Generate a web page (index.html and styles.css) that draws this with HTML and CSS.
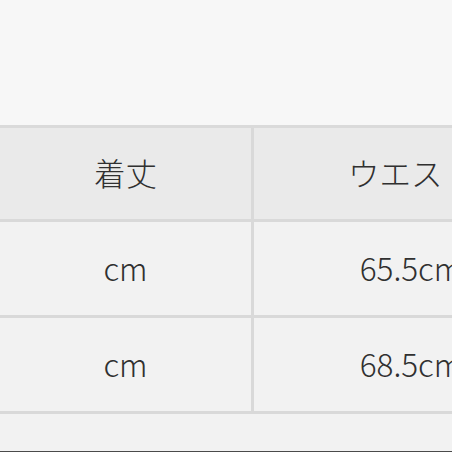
FILE: index.html
```html
<!DOCTYPE html>
<html lang="ja">
<head>
<meta charset="utf-8">
<link rel="stylesheet" href="styles.css">
</head>
<body>
<div class="page">
  <div class="top"></div>
  <div class="table">
    <div class="cell head">着丈</div>
    <div class="cell head">ウエスト</div>
    <div class="cell">cm</div>
    <div class="cell">65.5cm</div>
    <div class="cell">cm</div>
    <div class="cell">68.5cm</div>
  </div>
  <div class="rest"></div>
</div>
</body>
</html>
```
FILE: styles.css
```css
html, body {
  margin: 0;
  padding: 0;
  width: 452px;
  height: 452px;
  overflow: hidden;
  background: #f6f6f6;
}
.page {
  height: 452px;
  display: flex;
  flex-direction: column;
  font-family: "Noto Sans CJK JP", "Noto Sans", sans-serif;
  font-weight: 300;
  color: #303030;
}
.top {
  height: 125px;
  flex: none;
  background: #f7f7f7;
}
.table {
  flex: none;
  display: grid;
  grid-template-columns: 254px 317px;
  width: max-content;
  border-top: 3px solid #dadada;
  background: #f2f2f2;
}
.cell {
  box-sizing: border-box;
  height: 96px;
  border-right: 3px solid #d9d9d9;
  border-bottom: 3px solid #d9d9d9;
  display: flex;
  align-items: center;
  justify-content: center;
  font-size: 31.5px;
  line-height: 1;
  white-space: nowrap;
  padding-bottom: 1px;
}
.head {
  height: 94px;
  background: #eaeaea;
}
.rest {
  flex: 1;
  background: #f2f2f2;
  border-bottom: 1px solid #4a4a4a;
}
```
